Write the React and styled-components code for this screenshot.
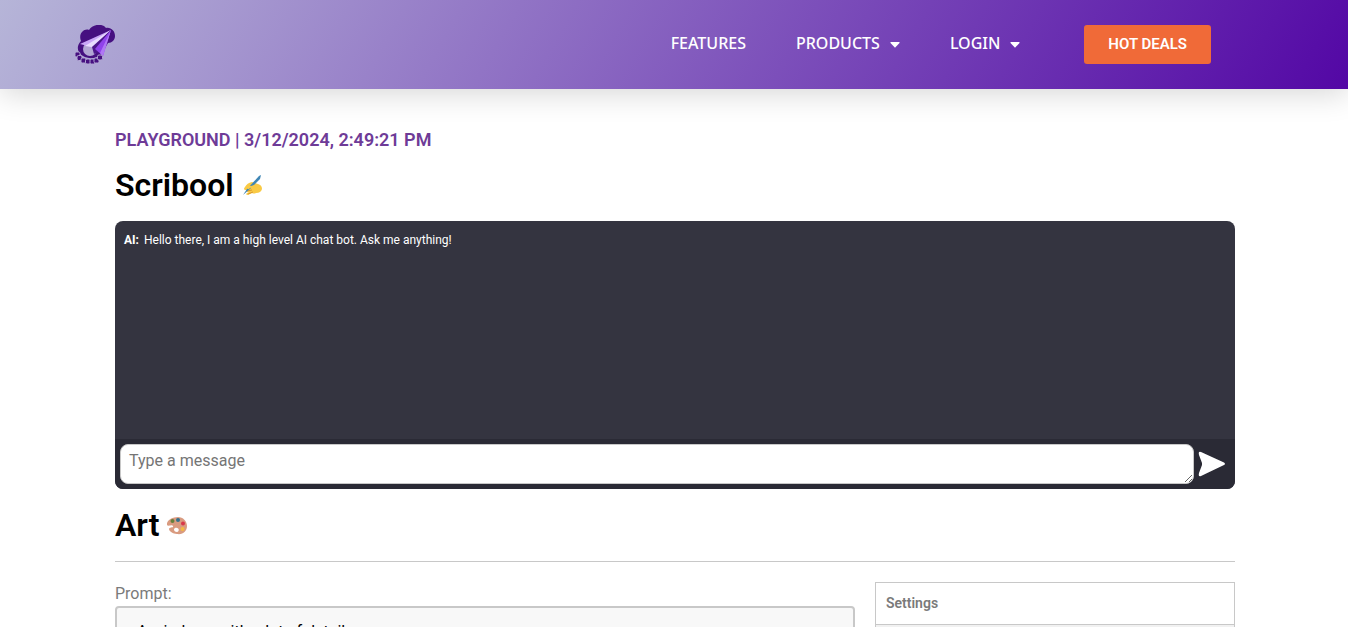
import React, { useState } from "react";
import styled, { createGlobalStyle } from "styled-components";

const theme = {
  font: `Roboto, "Liberation Sans", sans-serif`,
  navFont: `"Noto Sans", "Open Sans", sans-serif`,
  purple: "#6e3b97",
  orange: "#f06a38",
  chat: "#343440",
  chatFooter: "#2a2a35",
  grey: "#7a7a7a",
  border: "#c8c8c8",
};

const GlobalStyle = createGlobalStyle`
  * {
    box-sizing: border-box;
  }

  html {
    scrollbar-width: none;
  }

  body {
    margin: 0;
    background-color: white;
    color: ${theme.grey};
    font-family: ${theme.font};
    font-size: 16px;
  }
`;

const Header = styled.header`
  display: flex;
  align-items: center;
  justify-content: space-between;
  height: 89px;
  padding: 0 137px 0 75px;
  background: linear-gradient(120deg, #b6b5d8 0%, #5307a5 100%);
  box-shadow: 0 5px 30px rgba(0, 0, 0, 0.16);
`;

const LogoLink = styled.a`
  display: flex;
`;

const Nav = styled.nav`
  display: flex;
  align-items: center;
  gap: 50px;
`;

const NavLink = styled.a`
  display: flex;
  align-items: center;
  gap: 10px;
  padding-bottom: 3px;
  color: white;
  font-family: ${theme.navFont};
  font-size: 16px;
  font-weight: 500;
  line-height: 20px;
  text-decoration: none;

  svg {
    margin-top: 3px;
  }
`;

const HotDeals = styled.a`
  margin-left: 14px;
  padding: 12px 24px;
  border-radius: 3px;
  background-color: ${theme.orange};
  color: white;
  font-size: 15px;
  font-weight: 600;
  line-height: 15px;
  text-decoration: none;
`;

const Main = styled.main`
  padding: 40px 113px 0 115px;
`;

const PageInfo = styled.h2`
  margin: 0;
  color: ${theme.purple};
  font-size: 18px;
  font-weight: 600;
  line-height: 22px;
`;

const Title = styled.h1`
  display: flex;
  align-items: center;
  gap: 8px;
  margin: 14px 0 16px;
  color: black;
  font-size: 32px;
  font-weight: 600;
  line-height: 40px;
`;

const Chat = styled.section`
  overflow: hidden;
  margin-bottom: 16px;
  border-radius: 8px;
  background-color: ${theme.chat};
`;

const Messages = styled.div`
  height: 218px;
  padding: 10px 9px;
  color: white;
  font-size: 12px;
  line-height: 18px;
`;

const Sender = styled.strong`
  margin-right: 5px;
`;

const ChatForm = styled.form`
  display: flex;
  align-items: center;
  gap: 4px;
  padding: 5px 9px 5px 5px;
  background-color: ${theme.chatFooter};
`;

const MessageInput = styled.textarea`
  flex: 1;
  height: 40px;
  padding: 4px 8px;
  border: 1px solid ${theme.border};
  border-radius: 8px;
  font-family: ${theme.font};
  font-size: 16px;
  line-height: 24px;

  &::placeholder {
    color: #757575;
  }
`;

const SendButton = styled.button`
  display: flex;
  padding: 0;
  border: none;
  background: none;
  cursor: pointer;
`;

const Art = styled.section`
  display: flex;
  align-items: flex-start;
  gap: 20px;
  padding-top: 20px;
  border-top: 1px solid ${theme.border};
`;

const PromptField = styled.div`
  display: flex;
  flex: 1;
  flex-direction: column;
`;

const PromptLabel = styled.label`
  line-height: 24px;
`;

const PromptInput = styled.textarea`
  height: 150px;
  padding: 14px 20px;
  border: 2px solid ${theme.border};
  border-radius: 4px;
  background-color: #f8f8f8;
  color: black;
  font-family: ${theme.font};
  font-size: 16px;
  line-height: 20px;
  resize: none;
`;

const Settings = styled.aside`
  width: 360px;
  border: 1px solid ${theme.border};
`;

const SettingsTitle = styled.h3`
  margin: 0;
  padding: 10px;
  border-bottom: 1px solid ${theme.border};
  font-size: 14px;
  font-weight: 600;
  line-height: 21px;
`;

const SettingsBody = styled.div`
  height: 120px;
  background-color: #f1f1f1;
`;

const Logo = () => (
  <svg width="40" height="40" viewBox="0 1 40 40" aria-hidden="true">
    <path
      d="M8 32C2 29 1 22 6 17C3 10 9 4 14 6C17 0 28 -1 31 4C36 3 40 7 40 12C40 16 37 19 33 19L26 31C21 35 13 35 8 32Z"
      fill="#461080"
    />
    <circle cx="15" cy="25" r="7" fill="#b2a6d4" />
    <path d="M5 20L36 6L18 24L13 22Z" fill="#c9a6f7" />
    <path d="M36 6L10 22L17 23Z" fill="#e9dcff" />
    <path d="M36 6L17 23L19 30L24 28Z" fill="#4b168a" />
    <path d="M36 6L20 25L28 32Z" fill="#9042eb" />
    <path d="M36 6L28 32L25 29Z" fill="#b077f5" />
    <g fill="#461080" stroke="#b2a6d4" strokeWidth="1">
      <rect x="0" y="28" width="5" height="5" rx="1.5" />
      <rect x="2" y="31.5" width="5" height="5" rx="1.5" />
      <rect x="6" y="34" width="5" height="5" rx="1.5" />
      <rect x="10.5" y="35" width="5" height="5" rx="1.5" />
      <rect x="15" y="35" width="5" height="5" rx="1.5" />
      <rect x="19" y="34" width="5" height="5" rx="1.5" />
      <rect x="22.5" y="31" width="5" height="5" rx="1.5" />
    </g>
  </svg>
);

const Caret = () => (
  <svg width="10" height="6" viewBox="0 0 10 6" aria-hidden="true">
    <path d="M1 0H9Q10 0 9.5 1L5.7 5Q5 6 4.3 5L.5 1Q0 0 1 0Z" fill="white" />
  </svg>
);

const WritingHand = () => (
  <svg width="22" height="22" viewBox="0 -1 22 22" aria-hidden="true">
    <path
      d="M3 12Q5 8 10 7L16 9Q20 10 20 14Q19 18 14 18Q12 19 10 18L6 20Q3 20 5 18L7 17Q3 17 5 15L3 15Q1 14 3 12Z"
      fill="#f9ca45"
    />
    <path d="M5 16L10 15M6 19L11 17" stroke="#d9952e" />
    <path d="M1 20L5 14L17 1L19 0L18 4L9 13Z" fill="#3f86b5" />
    <path d="M6 14Q7 11 10 12L12 11" fill="none" stroke="#f9ca45" strokeWidth="2" />
  </svg>
);

const Palette = () => (
  <svg width="20" height="22" viewBox="0 -3 20 22" aria-hidden="true">
    <path
      fillRule="evenodd"
      d="M11 0C16 0 20 4 20 9C20 14 16 18 10 17C6 17 2 14 2 12C2 10 7 11 6 9C5 7 1 10 0 8C-1 4 5 0 11 0ZM8 11C6 12 7 15 10 15C13 14 12 10 8 11Z"
      fill="#d99b80"
    />
    <circle cx="5.5" cy="4" r="2" fill="#66803c" />
    <circle cx="11" cy="3" r="2" fill="#34718d" />
    <circle cx="16" cy="6.5" r="2" fill="#d93849" />
    <circle cx="15.5" cy="12" r="2" fill="#f4b942" />
  </svg>
);

const SendIcon = () => (
  <svg width="28" height="26" viewBox="0 0 28 26" aria-hidden="true">
    <path d="M3 1L26 11.5Q28 13 26 14L3 25Q0 26 1 22L4 14Q4 13 4 12L1 4Q0 0 3 1Z" fill="white" />
  </svg>
);

const App = () => {
  const [message, setMessage] = useState("");
  const [prompt, setPrompt] = useState("A windows with a lot of details");

  const sendMessage = (e) => {
    e.preventDefault();
    setMessage("");
  };

  return (
    <>
      <GlobalStyle />
      <Header>
        <LogoLink href="#" aria-label="Home">
          <Logo />
        </LogoLink>
        <Nav>
          <NavLink href="#features">FEATURES</NavLink>
          <NavLink href="#products">
            PRODUCTS <Caret />
          </NavLink>
          <NavLink href="#login">
            LOGIN <Caret />
          </NavLink>
          <HotDeals href="#deals">HOT DEALS</HotDeals>
        </Nav>
      </Header>
      <Main>
        <PageInfo>PLAYGROUND | 3/12/2024, 2:49:21 PM</PageInfo>
        <Title>
          Scribool <WritingHand />
        </Title>
        <Chat>
          <Messages>
            <Sender>AI:</Sender>
            Hello there, I am a high level AI chat bot. Ask me anything!
          </Messages>
          <ChatForm onSubmit={sendMessage}>
            <MessageInput
              aria-label="Message"
              placeholder="Type a message"
              value={message}
              onChange={(e) => setMessage(e.target.value)}
            />
            <SendButton type="submit" aria-label="Send">
              <SendIcon />
            </SendButton>
          </ChatForm>
        </Chat>
        <Title>
          Art <Palette />
        </Title>
        <Art>
          <PromptField>
            <PromptLabel htmlFor="prompt">Prompt:</PromptLabel>
            <PromptInput
              id="prompt"
              value={prompt}
              onChange={(e) => setPrompt(e.target.value)}
            />
          </PromptField>
          <Settings>
            <SettingsTitle>Settings</SettingsTitle>
            <SettingsBody />
          </Settings>
        </Art>
      </Main>
    </>
  );
};

export default App;
